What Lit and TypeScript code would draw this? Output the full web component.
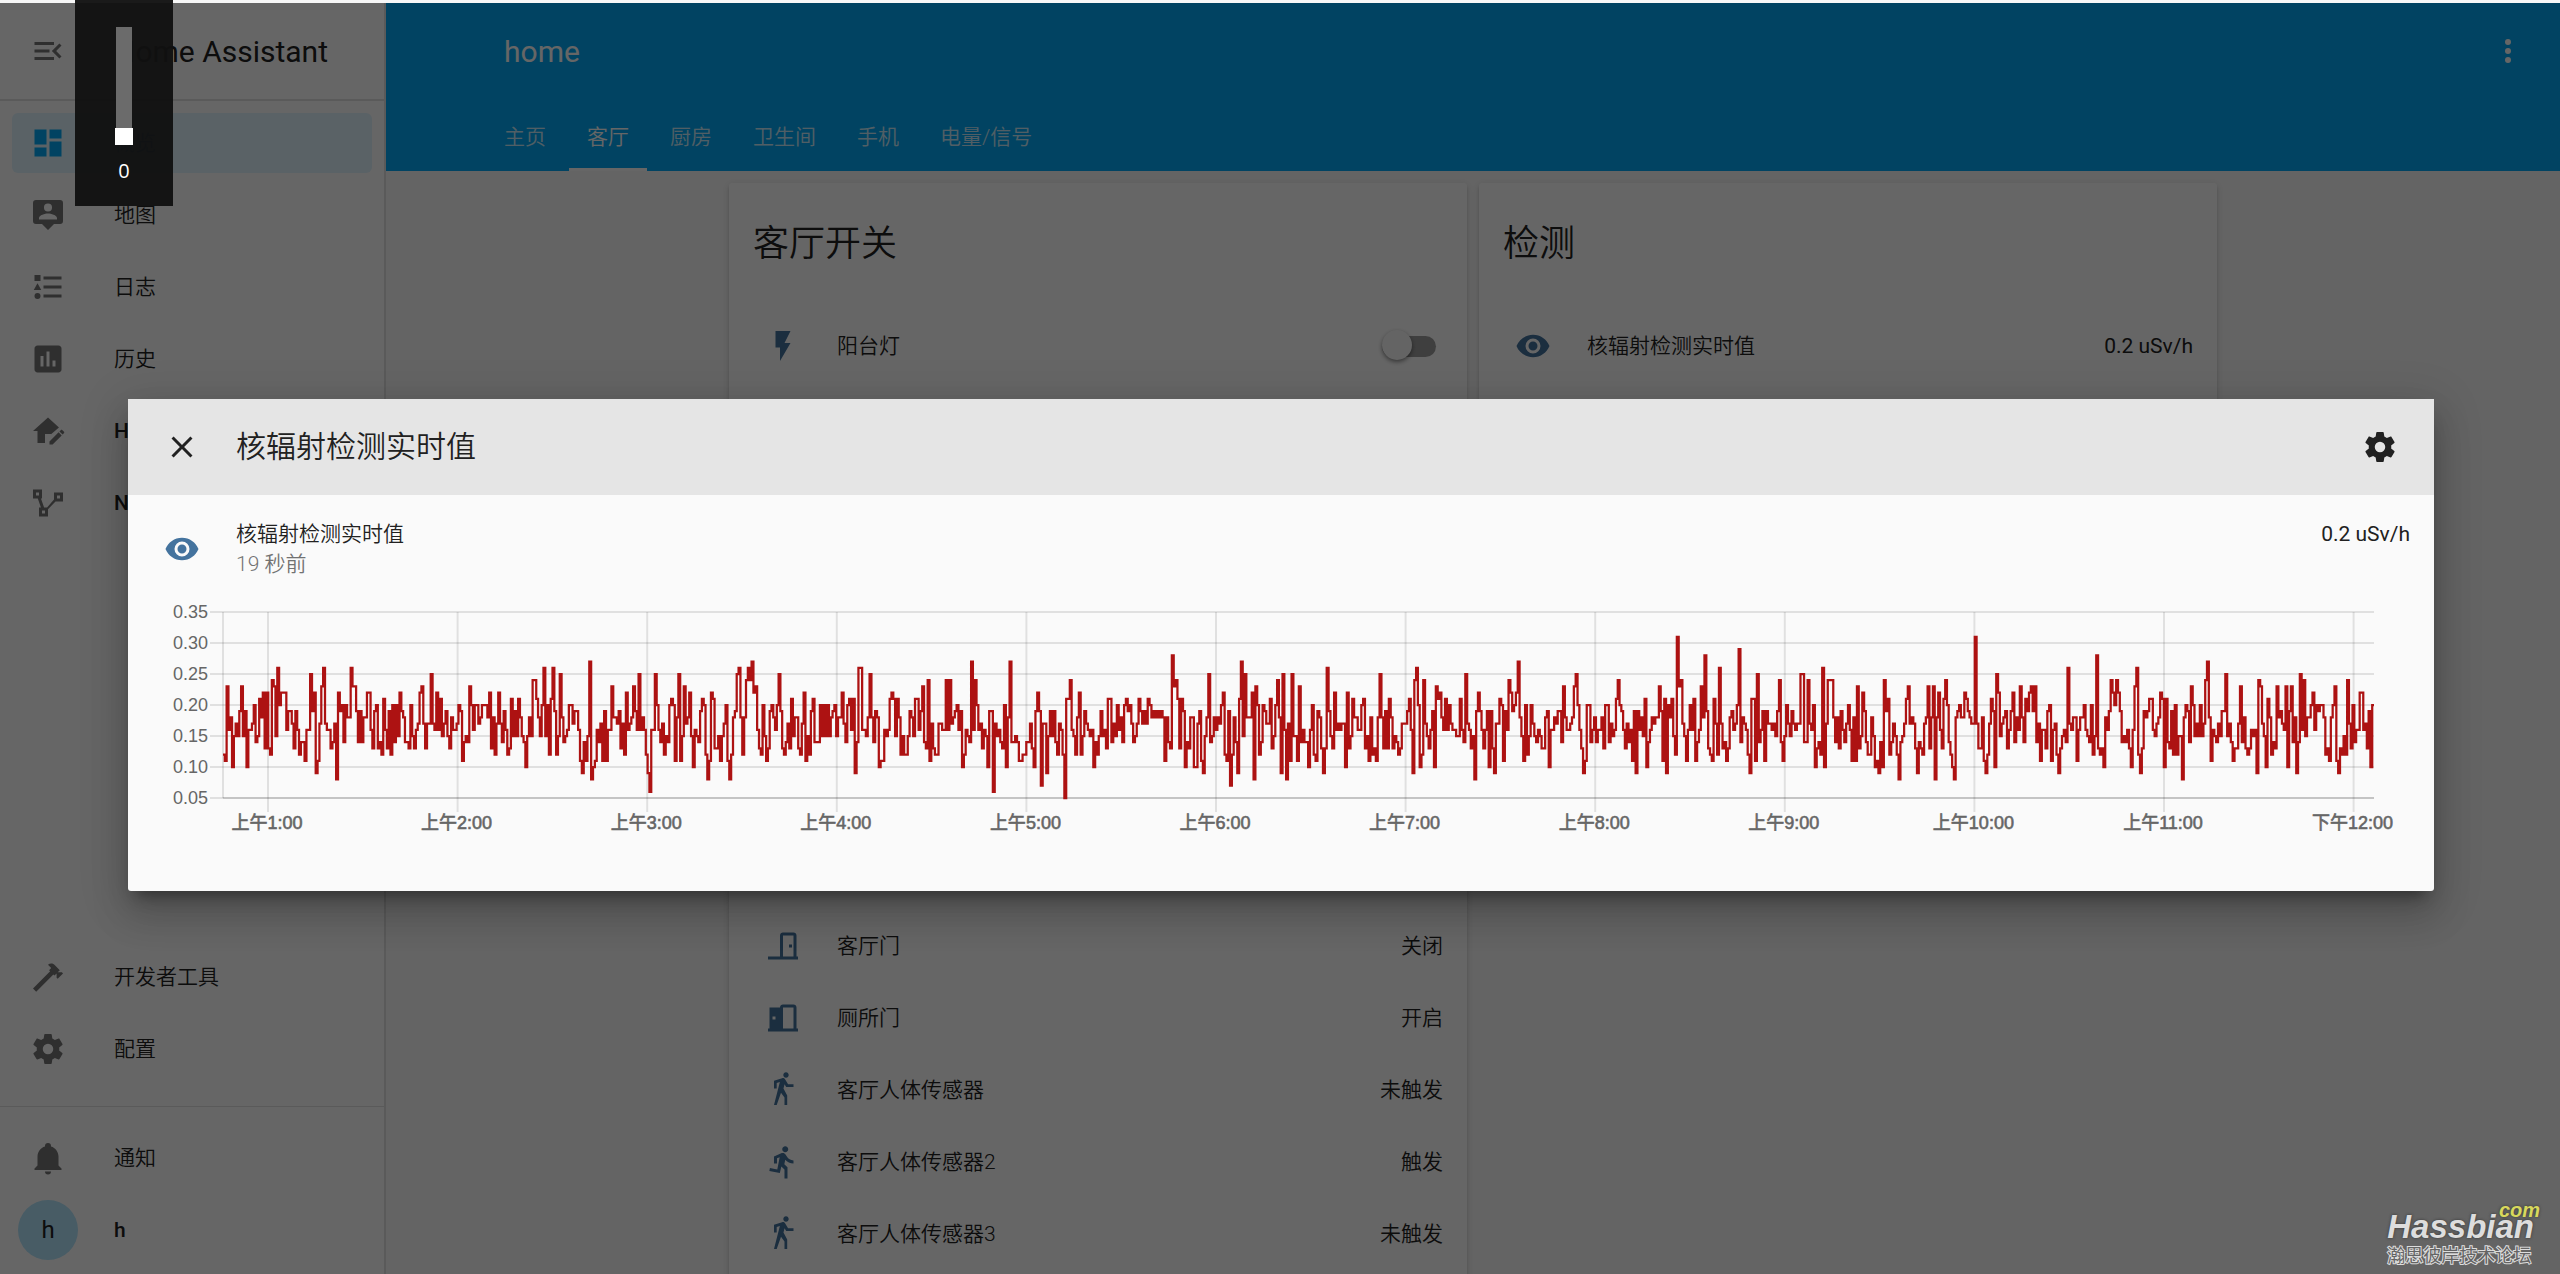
import { LitElement, html, svg, css } from "lit";
import { customElement, property } from "lit/decorators.js";
import { classMap } from "lit/directives/class-map.js";

const ICONS: Record<string, string> = {
  menuOpen:
    "M21,15.61L19.59,17L14.58,12L19.59,7L21,8.39L17.44,12L21,15.61M3,6H16V8H3V6M3,13V11H13V13H3M3,18V16H16V18H3Z",
  dashboard: "M13,3V9H21V3M13,21H21V11H13M3,21H11V15H3M3,13H11V3H3V13Z",
  map: "M20 2H4A2 2 0 0 0 2 4V16A2 2 0 0 0 4 18H8L12 22L16 18H20A2 2 0 0 0 22 16V4A2 2 0 0 0 20 2M12 4.3A2.7 2.7 0 1 1 9.3 7A2.7 2.7 0 0 1 12 4.3M18 15H6V14.1C6 12.1 10 11 12 11S18 12.1 18 14.1Z",
  list: "M5,9.5L7.5,14H2.5L5,9.5M3,4H7V8H3V4M5,20A2,2 0 0,0 7,18A2,2 0 0,0 5,16A2,2 0 0,0 3,18A2,2 0 0,0 5,20M9,5V7H21V5H9M9,19H21V17H9V19M9,13H21V11H9V13Z",
  chart:
    "M9 17H7V10H9V17M13 17H11V7H13V17M17 17H15V13H17V17M19 3H5C3.9 3 3 3.9 3 5V19C3 20.1 3.9 21 5 21H19C20.1 21 21 20.1 21 19V5C21 3.9 20.1 3 19 3Z",
  homeEdit:
    "M12,3L2,12H5V20H10V14H14V14.1L19.3,9.6L12,3Z M21.04,11.14C20.9,11.14 20.76,11.2 20.65,11.3L19.65,12.3L21.7,14.35L22.7,13.35C22.92,13.14 22.92,12.79 22.7,12.58L21.42,11.3C21.31,11.2 21.18,11.14 21.04,11.14M19.07,12.88L13,18.94V21H15.06L21.12,14.93Z",
  nodes:
    "M16,5V9.6L11.4,15H9.4L7.3,9H8V3H2V9H5.2L7.3,15H6V21H12V16.1L17,11H22V5H16M4,5H6V7H4V5M10,19H8V17H10V19M20,9H18V7H20V9Z",
  hammer:
    "M2,19.63L13.43,8.2L12.72,7.5L14.14,6.07L12,3.89C13.2,2.7 15.09,2.7 16.27,3.89L19.87,7.5L18.45,8.91H21.29L22,9.62L18.45,13.21L17.74,12.5V9.62L16.27,11.04L15.56,10.33L4.13,21.76L2,19.63Z",
  cog: "M12,15.5A3.5,3.5 0 0,1 8.5,12A3.5,3.5 0 0,1 12,8.5A3.5,3.5 0 0,1 15.5,12A3.5,3.5 0 0,1 12,15.5M19.43,12.97C19.47,12.65 19.5,12.33 19.5,12C19.5,11.67 19.47,11.34 19.43,11L21.54,9.37C21.73,9.22 21.78,8.95 21.66,8.73L19.66,5.27C19.54,5.05 19.27,4.96 19.05,5.05L16.56,6.05C16.04,5.66 15.5,5.32 14.87,5.07L14.5,2.42C14.46,2.18 14.25,2 14,2H10C9.75,2 9.54,2.18 9.5,2.42L9.13,5.07C8.5,5.32 7.96,5.66 7.44,6.05L4.95,5.05C4.73,4.96 4.46,5.05 4.34,5.27L2.34,8.73C2.21,8.95 2.27,9.22 2.46,9.37L4.57,11C4.53,11.34 4.5,11.67 4.5,12C4.5,12.33 4.53,12.65 4.57,12.97L2.46,14.63C2.27,14.78 2.21,15.05 2.34,15.27L4.34,18.73C4.46,18.95 4.73,19.03 4.95,18.95L7.44,17.94C7.96,18.34 8.5,18.68 9.13,18.93L9.5,21.58C9.54,21.82 9.75,22 10,22H14C14.25,22 14.46,21.82 14.5,21.58L14.87,18.93C15.5,18.67 16.04,18.34 16.56,17.94L19.05,18.95C19.27,19.03 19.54,18.95 19.66,18.73L21.66,15.27C21.78,15.05 21.73,14.78 21.54,14.63L19.43,12.97Z",
  bell: "M21,19V20H3V19L5,17V11C5,7.9 7.03,5.17 10,4.29C10,4.19 10,4.1 10,4A2,2 0 0,1 12,2A2,2 0 0,1 14,4C14,4.1 14,4.19 14,4.29C16.97,5.17 19,7.9 19,11V17L21,19M14,21A2,2 0 0,1 12,23A2,2 0 0,1 10,21",
  eye: "M12,9A3,3 0 0,0 9,12A3,3 0 0,0 12,15A3,3 0 0,0 15,12A3,3 0 0,0 12,9M12,17A5,5 0 0,1 7,12A5,5 0 0,1 12,7A5,5 0 0,1 17,12A5,5 0 0,1 12,17M12,4.5C7,4.5 2.73,7.61 1,12C2.73,16.39 7,19.5 12,19.5C17,19.5 21.27,16.39 23,12C21.27,7.61 17,4.5 12,4.5Z",
  flash: "M7,2V13H10V22L17,10H13L17,2H7Z",
  walk: "M14.12,10H19V8.2H15.38L13.38,4.87C13.08,4.37 12.54,4.03 11.92,4.03C11.74,4.03 11.58,4.06 11.42,4.11L6,5.8V11H7.8V7.33L9.91,6.67L6,22H7.8L10.67,13.89L13,17V22H14.8V15.59L12.31,11.05L13.04,8.18M14,3.8C15,3.8 15.8,3 15.8,2C15.8,1 15,.2 14,.2C13,.2 12.2,1 12.2,2C12.2,3 13,3.8 14,3.8Z",
  run: "M13.49 5.48c1.1 0 2-.9 2-2s-.9-2-2-2-2 .9-2 2 .9 2 2 2zm-3.6 13.9l1-4.4 2.1 2v6h2v-7.5l-2.1-2 .6-3c1.3 1.5 3.3 2.5 5.5 2.5v-2c-1.9 0-3.5-1-4.3-2.4l-1-1.6c-.4-.6-1-1-1.7-1-.3 0-.5.1-.8.1l-5.2 2.2v4.7h2v-3.4l1.8-.7-1.6 8.1-4.9-1-.4 2 7 1.4z",
  doorClosed:
    "M16,11H18V13H16V11M12,3H19C20.11,3 21,3.89 21,5V19H22V21H2V19H10V5C10,3.89 10.89,3 12,3M12,5V19H19V5H12Z",
  doorOpen:
    "M12,3C10.89,3 10,3.89 10,5H3V19H2V21H22V19H21V5C21,3.89 20.11,3 19,3H12M12,5H19V19H12V5M5,11H7V13H5V11Z",
  close:
    "M19,6.41L17.59,5L12,10.59L6.41,5L5,6.41L10.59,12L5,17.59L6.41,19L12,13.41L17.59,19L19,17.59L13.41,12L19,6.41Z",
  dots: "M12,16A2,2 0 0,1 14,18A2,2 0 0,1 12,20A2,2 0 0,1 10,18A2,2 0 0,1 12,16M12,10A2,2 0 0,1 14,12A2,2 0 0,1 12,14A2,2 0 0,1 10,12A2,2 0 0,1 12,10M12,4A2,2 0 0,1 14,6A2,2 0 0,1 12,8A2,2 0 0,1 10,6A2,2 0 0,1 12,4Z",
};

@customElement("ha-icon")
class HaIcon extends LitElement {
  @property() name = "";
  static styles = css`
    :host {
      display: block;
      flex: none;
      width: 36px;
      height: 36px;
    }
    .glyph {
      display: block;
      width: 100%;
      height: 100%;
      fill: currentColor;
      fill-rule: evenodd;
    }
  `;
  render() {
    return html`<svg class="glyph" viewBox="0 0 24 24" aria-hidden="true">
      <path d=${ICONS[this.name] ?? ""}></path>
    </svg>`;
  }
}

/* Sensor history: each run is [start along the time axis, readings].
   A reading is one base-36 digit, in hundredths of uSv/h. */
const AXIS_END = 2151;
const HISTORY: [number, string][] = [
  [0, "cbngiafhfjnfjagghkefl"],
  [38, "imdmdconfqkmmmgjjhdjg"],
  [76, "ceebggpjm9bhnqhggdeh8"],
  [115, "mjkekiiqnnjejeiimmgdj"],
  [153, "kdeclgdjckekfmjieedkf"],
  [191, "dghmnhdhhphgmglfhjfdi"],
  [230, "gghkjbefenkgkkhikkkim"],
  [268, "dichmhejgcdlfjflifeaf"],
  [306, "ifoolifkqfkclqjcfpief"],
  [344, "gkkhjjgb9ebfr8abgehbj"],
  [383, "bggniihjdhcmghinjgpgi"],
  [421, "gc96ggpkgehcfeklkbipb"],
  [459, "fnhimfagfejlkc8bmlddf"],
  [497, "bfhkb8cijpqicioqormng"],
  [536, "dckfbdjkigkpjdcehdlfiid"],
  [577, "chmbfcjleeekfkfkfijkf"],
  [615, "iimheklgl9eqqggfipiej"],
  [654, "iabbgfglmlflicfccfjif"],
  [692, "llgjnedobhdcchhggogoh"],
  [730, "ijkgjacgfergokghdgfaj"],
  [768, "j6hfgedkaireefebbccee"],
  [807, "hdajmj7hh9fjfjechgc5l"],
  [845, "logfcimcfjhgfgaecfjfg"],
  [883, "dllehfkgiekljkhefhljh"],
  [921, "jhlkijijijibiedsnoldl"],
  [960, "jaediiaahjb9fipefigih"],
  [998, "kmcbj7cie9lrfpiiim8nk"],
  [1036, "cekjhhldfkoi9pg8hbpff"],
  [1074, "bnegeeagkcbjid9dqjfdm"],
  [1113, "ghghhamdfliiggkldfbic"],
  [1151, "dbipidjdlidfec"],
  [1177, "dhhhjlg9oqkacohfdgj"],
  [1211, "anlmiglgkhggfflgeph"],
  [1246, "gdf8jmjgdgjajd9hhlk"],
  [1280, "bjgomjkmrifbkcfkhfe"],
  [1315, "gfddijaggihjjeniggh"],
  [1349, "inpkgd9bkkegieggidk"],
  [1384, "kehfglokjgdhegbj9jg"],
  [1418, "iflaegihiinjbl9kilf"],
  [1452, "cvnohfbgkglbegnisjd"],
  [1487, "cblhcqhdebdijghktei"],
  [1521, "hgc9llbpegjbjhhghfj"],
  [1556, "oebfkhfjhghhppeeohg"],
  [1590, "kadecqahoooieidjgeh"],
  [1625, "kgbibndfmjeccifab9e"],
  [1659, "aojlcehfc8efhlnhihd"],
  [1694, "9edchindin8im"],
  [1717, "gdlokeca8ijkiimljih"],
  [1750, "hvhddib9chljapmfhij"],
  [1784, "dgjmeignieljmnjneh"],
  [1817, "bggdjkbghc9dfgeqhg"],
  [1850, "iibgiikgfekcfsdcdai"],
  [1884, "gjomkomjefegdagnqc"],
  [1917, "9djijllgfhimlaledj"],
  [1950, "ckcff8ikjenkfhfkfho"],
  [1984, "ribgfehfjjpfhebddh"],
  [2017, "neidcdgfg9onhfalic"],
  [2050, "ednijhgnajnei9epgof"],
  [2084, "iikmgkjkkicdbiknb9"],
  [2117, "dcfcohdkeggmmghdjak"],
];

const LEFT = 71;
const TOP = 17;
const STEP = 31;
const yOf = (hundredths: number) => TOP + ((35 - hundredths) * STEP) / 5;

function historyPath(): string {
  let d = "";
  HISTORY.forEach(([start, run], i) => {
    const end = i + 1 < HISTORY.length ? HISTORY[i + 1][0] : AXIS_END;
    const pitch = (end - start) / run.length;
    [...run].forEach((digit, k) => {
      const x = (LEFT + start + k * pitch).toFixed(2);
      const y = yOf(parseInt(digit, 36)).toFixed(1);
      d += d ? `H${x}V${y}` : `M${x},${y}`;
    });
  });
  return `${d}H${LEFT + AXIS_END}`;
}

@customElement("history-chart")
class HistoryChart extends LitElement {
  static styles = css`
    :host {
      display: block;
    }
    .chart {
      display: block;
      width: 100%;
      overflow: visible;
      font-family: "Liberation Sans", "Noto Sans CJK SC", sans-serif;
      font-size: 18px;
    }
    .grid {
      stroke: rgba(0, 0, 0, 0.1);
      stroke-width: 2;
      fill: none;
    }
    .base {
      stroke: rgba(0, 0, 0, 0.12);
      stroke-width: 2;
    }
    .line {
      stroke: #ad1212;
      stroke-width: 2.25;
      fill: none;
    }
    .value {
      fill: #666;
      text-anchor: end;
    }
    .hour {
      fill: #666;
      stroke: #666;
      stroke-width: 0.6;
      text-anchor: middle;
    }
  `;
  render() {
    const values = [35, 30, 25, 20, 15, 10, 5];
    const hours = Array.from({ length: 12 }, (_, i) => i + 1);
    const right = LEFT + AXIS_END;
    const bottom = yOf(5);
    return html`<svg class="chart" viewBox="0 0 2258 250" role="img" aria-label="核辐射检测实时值">
      ${values.map(
        (v) => svg`<path class="grid" d="M${LEFT - 13},${yOf(v)}H${right}"></path>
          <text class="value" x="56" y=${yOf(v) + 6}>${(v / 100).toFixed(2)}</text>`
      )}
      <path class="grid" d="M${LEFT},${TOP}V${bottom}"></path>
      ${hours.map((h) => {
        const x = 116 + (h - 1) * 189.6;
        return svg`<path class="grid" d="M${x},${TOP}V${bottom + 14}"></path>
          <text class="hour" x=${x - 1} y="234">${h < 12 ? "上午" : "下午"}${h}:00</text>`;
      })}
      <path class="base" d="M${LEFT},${bottom}H${right}"></path>
      <path class="line" d=${historyPath()}></path>
    </svg>`;
  }
}

interface NavItem {
  icon: string;
  label: string;
  selected?: boolean;
  latin?: boolean;
}

const NAV: NavItem[] = [
  { icon: "dashboard", label: "概览", selected: true },
  { icon: "map", label: "地图" },
  { icon: "list", label: "日志" },
  { icon: "chart", label: "历史" },
  { icon: "homeEdit", label: "HACS", latin: true },
  { icon: "nodes", label: "Node-RED", latin: true },
];
const TOOLS: NavItem[] = [
  { icon: "hammer", label: "开发者工具" },
  { icon: "cog", label: "配置" },
];
const TABS = ["主页", "客厅", "厨房", "卫生间", "手机", "电量/信号"];
const SENSORS = [
  ["doorClosed", "客厅门", "关闭"],
  ["doorOpen", "厕所门", "开启"],
  ["walk", "客厅人体传感器", "未触发"],
  ["run", "客厅人体传感器2", "触发"],
  ["walk", "客厅人体传感器3", "未触发"],
];

@customElement("app-root")
class AppRoot extends LitElement {
  static styles = css`
    :host {
      display: block;
      font-family: Roboto, "Noto Sans CJK SC", sans-serif;
      font-size: 21px;
      line-height: 30px;
      color: #212121;
    }
    * {
      box-sizing: border-box;
    }
    h1,
    h2,
    p {
      margin: 0;
      font-weight: 400;
    }
    a {
      color: inherit;
      text-decoration: none;
    }
    button {
      display: block;
      padding: 0;
      border: 0;
      background: none;
      color: inherit;
      cursor: pointer;
    }
    .page {
      position: relative;
      display: flex;
      flex-direction: column;
      height: 100vh;
      overflow: hidden;
      background: #fafafa;
    }
    .strip {
      flex: none;
      height: 3px;
      background: #f7f7f7;
    }
    .shell {
      flex: 1;
      display: flex;
      min-height: 0;
    }
    .cjk {
      font-weight: 350;
    }

    .sidebar {
      flex: none;
      display: flex;
      flex-direction: column;
      width: 386px;
      padding-bottom: 14px;
      border-right: 2px solid rgba(0, 0, 0, 0.12);
      background: #fff;
    }
    .brand {
      display: flex;
      align-items: center;
      gap: 48px;
      height: 98px;
      padding: 0 30px;
      border-bottom: 2px solid rgba(0, 0, 0, 0.12);
      font-size: 30px;
    }
    .brand ha-icon {
      color: #757575;
    }
    .brand h1,
    .toolbar h2 {
      padding-top: 2px;
      font-size: 30px;
    }
    .nav {
      display: flex;
      flex-direction: column;
      gap: 12px;
      padding: 12px;
    }
    .nav.tools {
      margin-top: auto;
      padding-bottom: 27px;
      border-bottom: 1px solid rgba(0, 0, 0, 0.12);
    }
    .nav.user {
      padding: 21px 12px 0;
    }
    .item {
      display: flex;
      align-items: center;
      gap: 48px;
      height: 60px;
      padding: 0 18px;
      border-radius: 6px;
    }
    .item ha-icon {
      color: #757575;
    }
    .item.latin {
      font-weight: 500;
    }
    .item.selected {
      background: #e1f5fe;
      color: #03a9f4;
    }
    .item.selected ha-icon {
      color: #03a9f4;
    }
    .item.profile {
      gap: 36px;
      padding: 0 6px;
    }
    .avatar {
      width: 60px;
      height: 60px;
      border-radius: 50%;
      background: #b3e5fc;
      font-size: 24px;
      font-weight: 400;
      line-height: 60px;
      text-align: center;
    }

    .main {
      flex: 1;
      min-width: 0;
    }
    .header {
      height: 168px;
      background: #03a9f4;
      color: #fff;
    }
    .toolbar {
      display: flex;
      align-items: center;
      justify-content: space-between;
      height: 96px;
      padding: 0 34px 0 118px;
    }
    .tabs {
      display: flex;
      gap: 5px;
      height: 72px;
      padding-left: 100px;
    }
    .tab {
      padding: 23px 18px 0;
      border-bottom: 3px solid transparent;
      color: rgba(255, 255, 255, 0.8);
    }
    .tab.active {
      border-color: #fff;
      color: #fff;
    }
    .columns {
      display: grid;
      grid-template-columns: repeat(2, minmax(0, 738px));
      justify-content: center;
      gap: 12px;
      padding: 12px 6px;
    }
    .column {
      display: flex;
      flex-direction: column;
      gap: 12px;
    }
    .card {
      padding-bottom: 24px;
      border-radius: 3px;
      background: #fff;
      box-shadow:
        0 3px 3px 0 rgba(0, 0, 0, 0.14),
        0 2px 8px 0 rgba(0, 0, 0, 0.12),
        0 5px 2px -3px rgba(0, 0, 0, 0.2);
    }
    .card.switches {
      min-height: 691px;
    }
    .card.sensors {
      padding-top: 24px;
    }
    .title {
      padding: 31px 24px 36px;
      font-size: 36px;
      line-height: 60px;
    }
    .row {
      display: flex;
      align-items: center;
      height: 72px;
      padding: 0 24px;
    }
    .row ha-icon {
      margin: 0 36px 0 12px;
      color: #44739e;
    }
    .name {
      flex: 1;
    }
    .switch {
      appearance: none;
      position: relative;
      width: 54px;
      height: 21px;
      margin: 0 7px 0 0;
      border-radius: 11px;
      background: #9e9e9e;
    }
    .switch::before {
      content: "";
      position: absolute;
      left: 0;
      top: -6px;
      width: 30px;
      height: 30px;
      border-radius: 50%;
      background: #fafafa;
      box-shadow: 0 2px 4px rgba(0, 0, 0, 0.45);
    }

    .scrim {
      position: absolute;
      inset: 3px 0 0;
      display: flex;
      align-items: center;
      padding: 13px 126px 0 5%;
      background: rgba(0, 0, 0, 0.6);
    }
    .dialog {
      flex: 1;
      border-radius: 3px;
      background: #fafafa;
      box-shadow:
        0 24px 36px 3px rgba(0, 0, 0, 0.14),
        0 9px 45px 8px rgba(0, 0, 0, 0.12),
        0 12px 15px -8px rgba(0, 0, 0, 0.4);
    }
    .dialog-bar {
      display: flex;
      align-items: center;
      gap: 36px;
      height: 96px;
      padding: 0 36px;
      background: #e5e5e5;
    }
    .dialog-bar h2 {
      flex: 1;
      font-size: 30px;
    }
    .state {
      display: flex;
      align-items: center;
      padding: 24px 24px 0 36px;
    }
    .state ha-icon {
      margin-right: 36px;
      color: #44739e;
    }
    .state .info {
      flex: 1;
    }
    .ago {
      color: #727272;
    }
    .reading {
      align-self: flex-start;
    }
    .graph {
      padding: 16px 24px 46px;
    }

    .volume {
      position: absolute;
      left: 75px;
      top: 0;
      display: flex;
      flex-direction: column;
      align-items: center;
      gap: 11px;
      width: 98px;
      height: 206px;
      padding-top: 27px;
      background: rgba(17, 17, 17, 0.96);
      color: #fff;
      font-family: "Open Sans", "Noto Sans", sans-serif;
      font-size: 20px;
    }
    .level {
      appearance: none;
      writing-mode: vertical-lr;
      direction: rtl;
      width: 18px;
      height: 118px;
      margin: 0;
      background: linear-gradient(#6b6b6b, #6b6b6b) center / 16px 100% no-repeat;
    }
    .level::-webkit-slider-thumb {
      appearance: none;
      width: 18px;
      height: 17px;
      background: #fff;
    }

    .mark {
      position: absolute;
      right: 26px;
      bottom: 8px;
      font-family: "Liberation Sans", "Noto Sans CJK SC", sans-serif;
      font-weight: 700;
    }
    .mark-name {
      margin-bottom: 2px;
      color: #ddd;
      font-size: 33px;
      font-style: italic;
      line-height: 34px;
      text-shadow: 0 0 3px #333;
    }
    .mark-com {
      position: absolute;
      right: -6px;
      top: -12px;
      color: #d8d85c;
      font-size: 20px;
      font-style: italic;
      line-height: 24px;
      text-shadow: 0 0 3px #333;
    }
    .mark-sub {
      color: #646464;
      font-size: 18px;
      font-weight: 400;
      line-height: 20px;
      -webkit-text-stroke: 2px #ddd;
      paint-order: stroke fill;
    }
  `;

  private navItem(item: NavItem) {
    return html`<a
      href="#"
      class=${classMap({
        item: true,
        cjk: !item.latin,
        latin: !!item.latin,
        selected: !!item.selected,
      })}
    >
      <ha-icon name=${item.icon}></ha-icon><span>${item.label}</span>
    </a>`;
  }

  private row(icon: string, name: string, state: unknown) {
    return html`<div class="row cjk">
      <ha-icon name=${icon}></ha-icon><span class="name">${name}</span>${state}
    </div>`;
  }

  render() {
    return html`
      <div class="page">
        <div class="strip"></div>
        <div class="shell">
          <aside class="sidebar">
            <div class="brand">
              <button aria-label="菜单"><ha-icon name="menuOpen"></ha-icon></button>
              <h1>Home Assistant</h1>
            </div>
            <nav class="nav">${NAV.map((i) => this.navItem(i))}</nav>
            <nav class="nav tools">${TOOLS.map((i) => this.navItem(i))}</nav>
            <nav class="nav user">
              ${this.navItem({ icon: "bell", label: "通知" })}
              <a href="#" class="item latin profile"><span class="avatar">h</span><span>h</span></a>
            </nav>
          </aside>
          <main class="main">
            <header class="header">
              <div class="toolbar">
                <h2>home</h2>
                <button aria-label="更多"><ha-icon name="dots"></ha-icon></button>
              </div>
              <nav class="tabs">
                ${TABS.map(
                  (t, i) =>
                    html`<a href="#" class=${classMap({ tab: true, cjk: true, active: i === 1 })}>${t}</a>`
                )}
              </nav>
            </header>
            <div class="columns">
              <div class="column">
                <section class="card switches">
                  <h2 class="title cjk">客厅开关</h2>
                  ${this.row(
                    "flash",
                    "阳台灯",
                    html`<input class="switch" type="checkbox" role="switch" aria-label="阳台灯" />`
                  )}
                </section>
                <section class="card sensors">
                  ${SENSORS.map(([icon, name, state]) =>
                    this.row(icon, name, html`<span>${state}</span>`)
                  )}
                </section>
              </div>
              <div class="column">
                <section class="card switches">
                  <h2 class="title cjk">检测</h2>
                  ${this.row("eye", "核辐射检测实时值", html`<p>0.2 uSv/h</p>`)}
                </section>
              </div>
            </div>
          </main>
        </div>

        <div class="scrim">
          <section class="dialog" role="dialog" aria-label="核辐射检测实时值">
            <header class="dialog-bar">
              <button aria-label="关闭"><ha-icon name="close"></ha-icon></button>
              <h2 class="cjk">核辐射检测实时值</h2>
              <button aria-label="设置"><ha-icon name="cog"></ha-icon></button>
            </header>
            <div class="state">
              <ha-icon name="eye"></ha-icon>
              <div class="info">
                <p class="cjk">核辐射检测实时值</p>
                <p class="cjk ago">19 秒前</p>
              </div>
              <p class="reading">0.2 uSv/h</p>
            </div>
            <div class="graph"><history-chart></history-chart></div>
          </section>
        </div>

        <div class="volume">
          <input class="level" id="level" type="range" min="0" max="100" value="0" aria-label="音量" />
          <label for="level">0</label>
        </div>

        <div class="mark">
          <div class="mark-name">Hassbian</div>
          <div class="mark-com">com</div>
          <div class="mark-sub">瀚思彼岸技术论坛</div>
        </div>
      </div>
    `;
  }
}
